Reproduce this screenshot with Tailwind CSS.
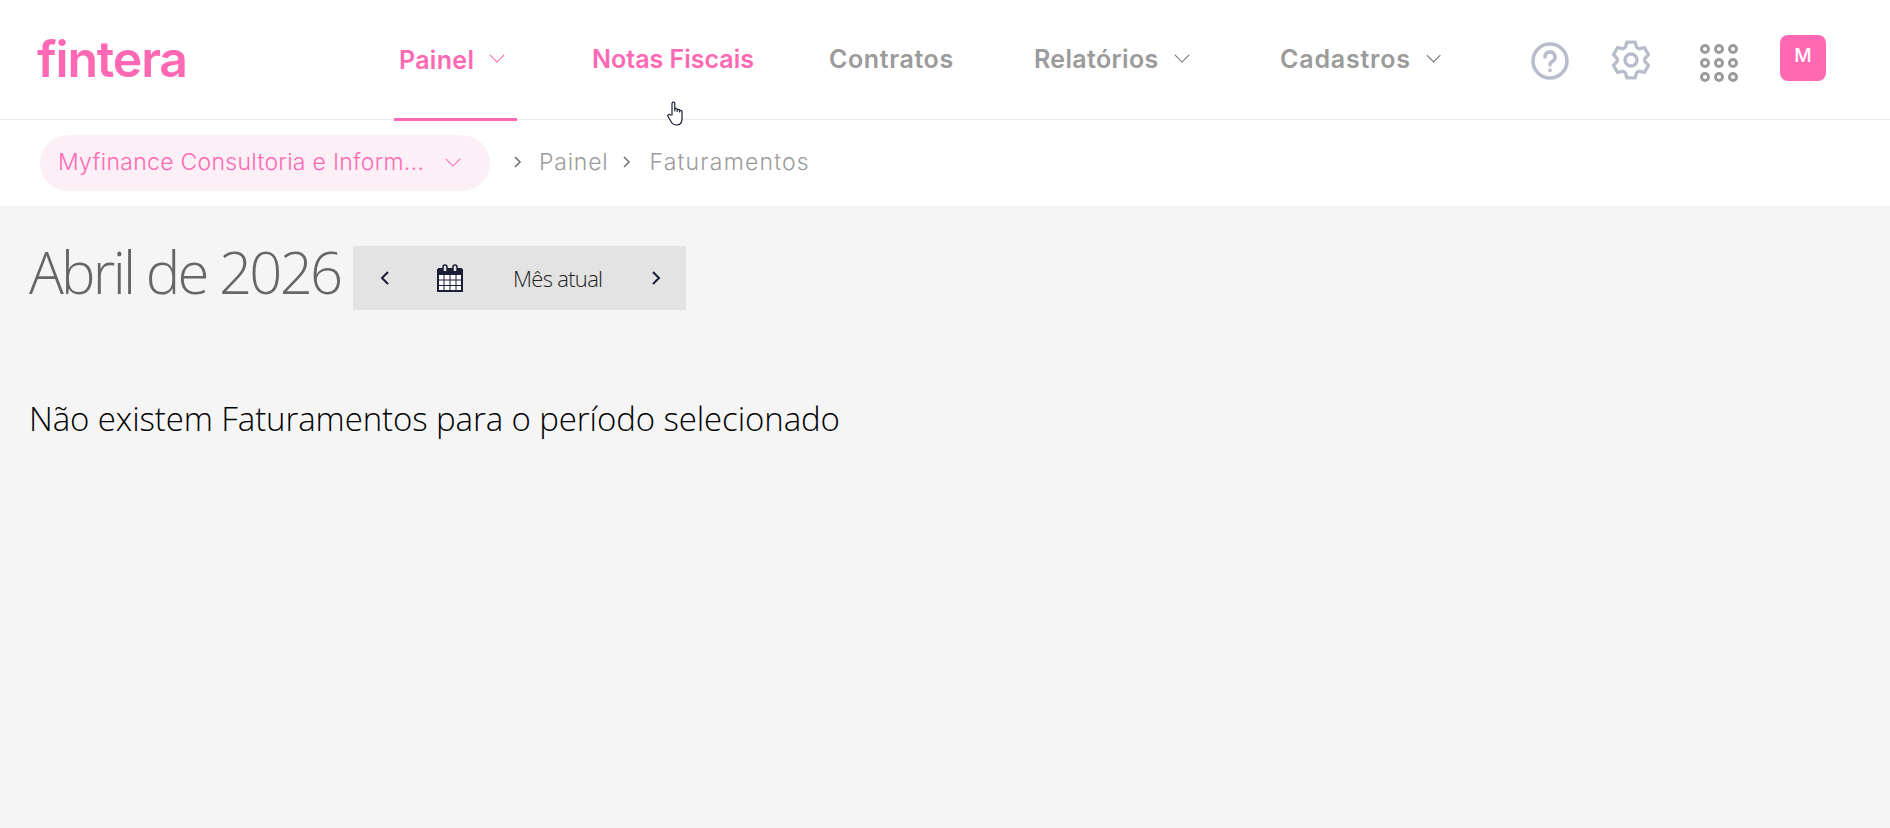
<!DOCTYPE html>
<html lang="pt-BR">

<head>
    <meta charset="UTF-8">
    <meta name="viewport" content="width=device-width, initial-scale=1.0">
    <title>Fintera - Faturamentos</title>
    <script src="https://cdn.jsdelivr.net/npm/@tailwindcss/browser@4"></script>
</head>

<body class="relative min-h-[828px] bg-[#f5f5f5] font-['Open_Sans',sans-serif] overflow-hidden">

    <!-- Navbar -->
    <header class="h-[120px] bg-white border-b border-[#ebebeb] flex font-['Inter',sans-serif]">
        <div class="w-[394px] pl-[37px] pt-[27px] text-[50px] leading-[64px] font-semibold text-[#ff69b4] tracking-[-1.200px]">fintera</div>
        <nav class="flex items-start text-[25px] font-semibold text-[#9b9b9b]">
            <a class="relative w-[123px] h-[121px] border-b-[3px] border-[#ff69b4] pl-[5px] pt-[3px] flex items-center gap-[15px] text-[#ff69b4] tracking-[0.300px]">
                Painel
                <svg class="-mt-[4px] w-[16px] h-[9px]" viewBox="0 0 18 10" fill="none" stroke="currentColor" stroke-width="1.3"><path d="M1 1l8 8 8-8" /></svg>
            </a>
            <a class="ml-[75px] w-[161px] h-[119px] flex items-center pt-[1px] text-[#ff69b4] whitespace-nowrap">Notas Fiscais</a>
            <a class="ml-[76px] w-[124px] h-[119px] flex items-center pt-[1px] whitespace-nowrap tracking-[0.600px]">Contratos</a>
            <a class="ml-[81px] w-[156px] h-[119px] flex items-center gap-[15px] pt-[1px] whitespace-nowrap tracking-[0.350px]">
                Relatórios
                <svg class="-mt-[3px] w-[16px] h-[9px] text-[#777]" viewBox="0 0 18 10" fill="none" stroke="currentColor" stroke-width="1.3"><path d="M1 1l8 8 8-8" /></svg>
            </a>
            <a class="ml-[90px] w-[161px] h-[119px] flex items-center gap-[15px] pt-[1px] whitespace-nowrap tracking-[0.800px]">
                Cadastros
                <svg class="-mt-[3px] w-[16px] h-[9px] text-[#777]" viewBox="0 0 18 10" fill="none" stroke="currentColor" stroke-width="1.3"><path d="M1 1l8 8 8-8" /></svg>
            </a>
        </nav>
        <div class="ml-[90px] flex items-start">
            <svg class="mt-[42px] w-[38px] h-[38px] text-[#b9bccb]" viewBox="0 0 38 38" fill="none" stroke="currentColor" stroke-width="3.500" stroke-linecap="round">
                <circle cx="19" cy="19" r="17" />
                <path d="M14 15a5 5 0 1 1 7.500 4.300c-1.600 1-2.500 2-2.500 3.700" />
                <path d="M19 28v.5" />
            </svg>
            <svg class="ml-[42px] mt-[40px] w-[40px] h-[40px] text-[#b9bccb]" viewBox="0 0 24 24" fill="none" stroke="currentColor" stroke-width="2" stroke-linejoin="round">
                <path d="M9.520 1.280L14.480 1.280L15.380 4.410L16.880 5.280L20.040 4.500L22.520 8.790L20.260 11.130L20.260 12.870L22.520 15.210L20.040 19.500L16.880 18.720L15.380 19.590L14.480 22.720L9.520 22.720L8.620 19.590L7.120 18.720L3.960 19.500L1.480 15.210L3.740 12.870L3.740 11.130L1.480 8.790L3.960 4.500L7.120 5.280L8.620 4.410Z" />
                <circle cx="12" cy="12" r="3.600" />
            </svg>
            <div class="ml-[49px] mt-[44px] grid grid-cols-3 gap-[4px]">
                <span class="w-[10px] h-[10px] rounded-full border-[3px] border-[#9b9b9b]"></span>
                <span class="w-[10px] h-[10px] rounded-full border-[3px] border-[#9b9b9b]"></span>
                <span class="w-[10px] h-[10px] rounded-full border-[3px] border-[#9b9b9b]"></span>
                <span class="w-[10px] h-[10px] rounded-full border-[3px] border-[#9b9b9b]"></span>
                <span class="w-[10px] h-[10px] rounded-full border-[3px] border-[#9b9b9b]"></span>
                <span class="w-[10px] h-[10px] rounded-full border-[3px] border-[#9b9b9b]"></span>
                <span class="w-[10px] h-[10px] rounded-full border-[3px] border-[#9b9b9b]"></span>
                <span class="w-[10px] h-[10px] rounded-full border-[3px] border-[#9b9b9b]"></span>
                <span class="w-[10px] h-[10px] rounded-full border-[3px] border-[#9b9b9b]"></span>
            </div>
            <div class="ml-[42px] mt-[35px] w-[46px] h-[46px] rounded-[8px] bg-[#ff69b4] text-white text-[19px] font-medium flex items-center justify-center pb-[4px]">M</div>
        </div>
    </header>

    <!-- Breadcrumb bar -->
    <div class="h-[86px] bg-white pl-[40px] pt-[15px] flex items-start font-['Inter',sans-serif] text-[23px] font-light text-[#9b9b9b]">
        <div class="w-[450px] h-[56px] rounded-full bg-[#fcf0f6] pl-[18px] pr-[29px] pb-[2px] flex items-center justify-between text-[#ff69b4] tracking-[0.300px]">
            <span class="whitespace-nowrap">Myfinance Consultoria e Inform...</span>
            <svg class="w-[16px] h-[9px]" viewBox="0 0 18 10" fill="none" stroke="currentColor" stroke-width="1.300"><path d="M1 1l8 8 8-8" /></svg>
        </div>
        <div class="h-[56px] pb-[2px] flex items-center tracking-[0.800px]">
            <svg class="ml-[24px] w-[8px] h-[12px] text-[#6f7478]" viewBox="0 0 8 12" fill="none" stroke="currentColor" stroke-width="1.600"><path d="M1 1l5 5-5 5" /></svg>
            <span class="ml-[17px]">Painel</span>
            <svg class="ml-[15px] w-[8px] h-[12px] text-[#6f7478]" viewBox="0 0 8 12" fill="none" stroke="currentColor" stroke-width="1.600"><path d="M1 1l5 5-5 5" /></svg>
            <span class="ml-[18px] tracking-[1.200px]">Faturamentos</span>
        </div>
    </div>

    <!-- Main Content -->
    <main class="pl-[29px]">
        <div class="mt-[40px] flex items-start">
            <h1 class="-mt-[11px] w-[324px] text-[58px] leading-[74px] font-light text-[#666] tracking-[-2.750px] whitespace-nowrap">Abril de 2026</h1>
            <div class="w-[333px] h-[64px] bg-[#e3e3e3] flex items-center text-[#1a1f36]">
                <svg class="ml-[27px] w-[10px] h-[16px]" viewBox="0 0 10 16" fill="none" stroke="currentColor" stroke-width="2"><path d="M8 2L2 8l6 6" /></svg>
                <svg class="ml-[47px] w-[26px] h-[28px]" viewBox="0 0 26 28" fill="none">
                    <path d="M1 6h24v21H1z" fill="#fff" stroke="#1a1f36" stroke-width="2" />
                    <path d="M1 4h24v7H1z" fill="#1a1f36" />
                    <path d="M7 11v16M13 11v16M19 11v16M1 16h24M1 21.500h24" stroke="#1a1f36" />
                    <path d="M6 7V3a2 2 0 0 1 4 0v4M16 7V3a2 2 0 0 1 4 0v4" stroke="#1a1f36" stroke-width="1.500" fill="#e3e3e3" />
                </svg>
                <span class="ml-[50px] w-[89px] text-[22px] font-light text-[#222] tracking-[-0.700px] whitespace-nowrap">Mês atual</span>
                <svg class="ml-[49px] w-[10px] h-[16px]" viewBox="0 0 10 16" fill="none" stroke="currentColor" stroke-width="2"><path d="M2 2l6 6-6 6" /></svg>
            </div>
        </div>
        <p class="mt-[87px] text-[33px] leading-[44px] font-light text-black tracking-[-0.100px] whitespace-nowrap">Não existem Faturamentos para o período selecionado</p>
    </main>

    <!-- Mouse cursor -->
    <svg class="absolute left-[667px] top-[101px] w-[18px] h-[25px]" viewBox="0 0 18 25" fill="#fff" stroke="#1a1f36" stroke-width="1.200" stroke-linejoin="round">
        <path d="M5 14V2.500a1.400 1.400 0 0 1 2.800 0V10V8.500a1.200 1.200 0 0 1 2.400 0V10.500V9.500a1.200 1.200 0 0 1 2.400 0V11V10.500a1.200 1.200 0 0 1 2.400 0V18c0 3.500-2 6-5.500 6-3 0-4.500-1.500-5.500-3.500L1 15.500c-.8-1.500 1-2.800 2.200-1.600z" />
    </svg>

</body>

</html>
